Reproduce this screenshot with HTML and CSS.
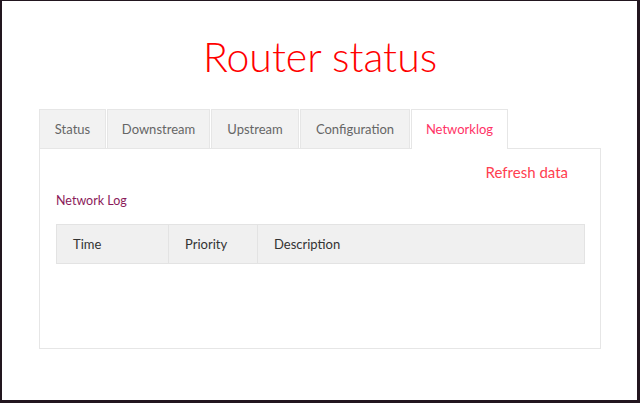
FILE: index.html
```html
<!DOCTYPE html>
<html>
<head>
<meta charset="utf-8">
<link rel="stylesheet" href="styles.css">
</head>
<body>
<div class="frame">
  <h1 class="title">Router status</h1>
  <div class="tabs">
    <div class="tab t-status">Status</div>
    <div class="tab t-down">Downstream</div>
    <div class="tab t-up">Upstream</div>
    <div class="tab t-conf">Configuration</div>
    <div class="tab t-net active">Networklog</div>
  </div>
  <div class="panel">
    <div class="refresh-row"><span class="refresh">Refresh data</span></div>
    <div class="section-title">Network Log</div>
    <table class="log">
      <thead>
        <tr><th class="c-time">Time</th><th class="c-prio">Priority</th><th>Description</th></tr>
      </thead>
    </table>
  </div>
</div>
</body>
</html>
```
FILE: styles.css
```css
html, body {
  margin: 0;
  padding: 0;
  background: #fff;
}
body {
  font-family: "Lato", "Liberation Sans", sans-serif;
}
.frame {
  box-sizing: border-box;
  width: 640px;
  height: 403px;
  border-style: solid;
  border-color: #22161f;
  border-width: 1px 3px 3px 2px;
  padding: 0 36px 0 37px;
}
.title {
  margin: 0;
  padding-top: 33px;
  height: 76px;
  box-sizing: border-box;
  text-align: center;
  font-weight: 300;
  font-size: 41px;
  line-height: 46px;
  color: #ff0000;
}
.tabs {
  display: flex;
  height: 39px;
  margin-top: 32px;
}
.tab {
  box-sizing: border-box;
  height: 39px;
  border: 1px solid #e6e6e6;
  border-bottom: none;
  margin-right: 1px;
  background: #f2f2f2;
  color: #666;
  font-size: 13px;
  line-height: 39px;
  text-align: center;
}
.t-status { width: 67px; }
.t-down { width: 103px; }
.t-up { width: 88px; }
.t-conf { width: 110px; }
.t-net { width: 97px; }
.tab.active {
  background: #fff;
  color: #ff3366;
  height: 40px;
  margin-bottom: -1px;
  position: relative;
  z-index: 1;
}
.panel {
  box-sizing: border-box;
  height: 201px;
  border: 1px solid #e6e6e6;
  padding: 0 16px 0 16px;
}
.refresh-row {
  display: flex;
  justify-content: flex-end;
  padding-top: 13px;
  padding-right: 16px;
  height: 20px;
}
.refresh {
  color: #ff4050;
  font-size: 15px;
  line-height: 20px;
}
.section-title {
  margin-top: 10px;
  color: #8b1a5a;
  font-size: 12.5px;
  line-height: 18px;
}
.log {
  margin-top: 14px;
  width: 529px;
  border-collapse: collapse;
}
.log th {
  background: #f0f0f0;
  border: 1px solid #e3e3e3;
  height: 38px;
  text-align: left;
  font-weight: 400;
  color: #333;
  font-size: 13px;
  padding: 0 16px;
}
.c-time { width: 79px; }
.c-prio { width: 56px; }
```
